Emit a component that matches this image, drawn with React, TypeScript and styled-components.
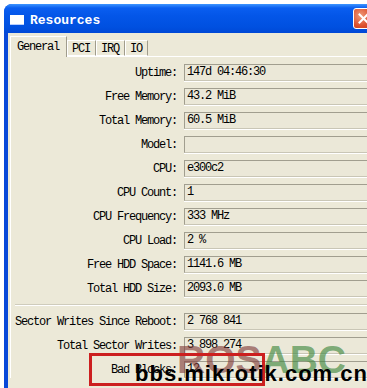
import React from "react";
import styled, { createGlobalStyle } from "styled-components";

const GlobalStyle = createGlobalStyle`
  html, body {
    margin: 0;
    padding: 0;
    background: #ffffff;
    overflow: hidden;
  }
`;

const Page = styled.div`
  position: relative;
  width: 367px;
  height: 388px;
  overflow: hidden;
  padding: 4px 0 0 4px;
  box-sizing: border-box;
`;

const Window = styled.div`
  width: 375px;
  background: #0848d8;
  border-radius: 8px 8px 0 0;
  padding: 0 0 0 4px;
  box-sizing: border-box;
  height: 420px;
  display: flex;
  flex-direction: column;
`;

const TitleBar = styled.div`
  height: 29px;
  margin-left: -4px;
  border-radius: 8px 8px 0 0;
  background: linear-gradient(#3d95ff 0, #0a5ef0 4px, #0456e8 40%, #0050e0 80%, #0048d6 100%);
  display: flex;
  align-items: center;
  padding: 3px 5px 0 6px;
  box-sizing: border-box;
`;

const TitleIcon = styled.div`
  width: 14px;
  height: 10px;
  background: #ffffff;
  border-bottom: 1px solid #b8cfff;
  box-sizing: border-box;
`;

const Title = styled.span`
  margin-left: 6px;
  color: #ffffff;
  font: bold 13px "Liberation Mono", monospace;
  flex: 1;
`;

const CloseButton = styled.div`
  width: 21px;
  height: 21px;
  margin-top: -3px;
  border: 1px solid #ffffff;
  border-radius: 3px;
  box-sizing: border-box;
  background: radial-gradient(circle at 35% 35%, #f09a7a, #dc4f2c 60%, #c23a1a);
  display: flex;
  align-items: center;
  justify-content: center;
`;

const Body = styled.div`
  flex: 1;
  background: #ece9d8;
  padding-top: 3px;
  font: 12px "Liberation Mono", monospace;
  letter-spacing: -1.2px;
  color: #000;
`;

const Tabs = styled.div`
  display: flex;
  align-items: flex-end;
  padding-left: 2px;
  height: 21px;
  position: relative;
  z-index: 1;
`;

const Tab = styled.div<{ $active?: boolean }>`
  height: ${(p) => (p.$active ? 21 : 16)}px;
  padding: ${(p) => (p.$active ? "3px 7px 0 6px" : "1px 5px 0 4px")};
  box-sizing: border-box;
  background: #ece9d8;
  border-top: 1px solid #ffffff;
  border-left: 1px solid #ffffff;
  border-right: 1px solid #a09c8c;
  border-bottom: ${(p) => (p.$active ? "none" : "1px solid #ffffff")};
  margin-bottom: ${(p) => (p.$active ? "0" : "1px")};
  line-height: 14px;
  white-space: nowrap;
`;

const Panel = styled.div`
  margin-left: 2px;
  margin-top: -1px;
  border-top: 1px solid #ffffff;
  border-left: 1px solid #ffffff;
  padding-top: 7px;
  display: flex;
  flex-direction: column;
  gap: 7px;
`;

const Row = styled.div`
  display: grid;
  grid-template-columns: 166px 1fr;
  column-gap: 7px;
  align-items: center;
`;

const Label = styled.div`
  text-align: right;
  white-space: nowrap;
`;

const Field = styled.div`
  height: 17px;
  box-sizing: border-box;
  border-top: 1px solid #a19e8f;
  border-left: 1px solid #a19e8f;
  border-bottom: 1px solid #c9c6b6;
  border-right: 1px solid #c9c6b6;
  box-shadow: 0 1px 0 #ffffff;
  background: #ebe8d8;
  padding-left: 2px;
  line-height: 15px;
  white-space: nowrap;
`;

const Separator = styled.div`
  height: 1px;
  margin: 0 0 1px 4px;
  background: #cfccbc;
  box-shadow: 0 1px 0 #ffffff;
`;

const Marker = styled.div`
  position: absolute;
  left: 89px;
  top: 353px;
  width: 176px;
  height: 33px;
  border: 3px solid #cc1f1f;
  box-sizing: border-box;
`;

const Stamp = styled.div`
  position: absolute;
  left: 177px;
  top: 340px;
  font: bold 39px "Liberation Sans", Arial, sans-serif;
  line-height: 1;
  white-space: nowrap;
`;

const StampPart = styled.span<{ $tone: string }>`
  color: ${(p) => p.$tone};
`;

const Site = styled.div`
  position: absolute;
  left: 135px;
  top: 363px;
  font: bold 22px "Liberation Sans", Arial, sans-serif;
  letter-spacing: 1px;
  line-height: 1;
  color: #000;
  white-space: nowrap;
`;

const rows1: [string, string][] = [
  ["Uptime:", "147d 04:46:30"],
  ["Free Memory:", "43.2 MiB"],
  ["Total Memory:", "60.5 MiB"],
  ["Model:", ""],
  ["CPU:", "e300c2"],
  ["CPU Count:", "1"],
  ["CPU Frequency:", "333 MHz"],
  ["CPU Load:", "2 %"],
  ["Free HDD Space:", "1141.6 MB"],
  ["Total HDD Size:", "2093.0 MB"],
];

const rows2: [string, string][] = [
  ["Sector Writes Since Reboot:", "2 768 841"],
  ["Total Sector Writes:", "3 898 274"],
  ["Bad Blocks:", "12"],
];

const App: React.FC = () => {
  return (
    <Page>
      <GlobalStyle />
      <Window>
        <TitleBar>
          <TitleIcon />
          <Title>Resources</Title>
          <CloseButton>
            <svg width="11" height="11" viewBox="0 0 11 11">
              <path d="M1.5 1.5 L9.5 9.5 M9.5 1.5 L1.5 9.5" stroke="#fff" strokeWidth="2" strokeLinecap="square" />
            </svg>
          </CloseButton>
        </TitleBar>
        <Body>
          <Tabs>
            <Tab $active>General</Tab>
            <Tab>PCI</Tab>
            <Tab>IRQ</Tab>
            <Tab>IO</Tab>
          </Tabs>
          <Panel>
            {rows1.map(([label, value]) => (
              <Row key={label}>
                <Label>{label}</Label>
                <Field>{value}</Field>
              </Row>
            ))}
            <Separator />
            {rows2.map(([label, value]) => (
              <Row key={label}>
                <Label>{label}</Label>
                <Field>{value}</Field>
              </Row>
            ))}
          </Panel>
        </Body>
      </Window>
      <Stamp>
        <StampPart $tone="rgba(130, 62, 60, 0.65)">ROS</StampPart>
        <StampPart $tone="rgba(62, 135, 62, 0.65)">ABC</StampPart>
      </Stamp>
      <Marker />
      <Site>bbs.mikrotik.com.cn</Site>
    </Page>
  );
};

export default App;
